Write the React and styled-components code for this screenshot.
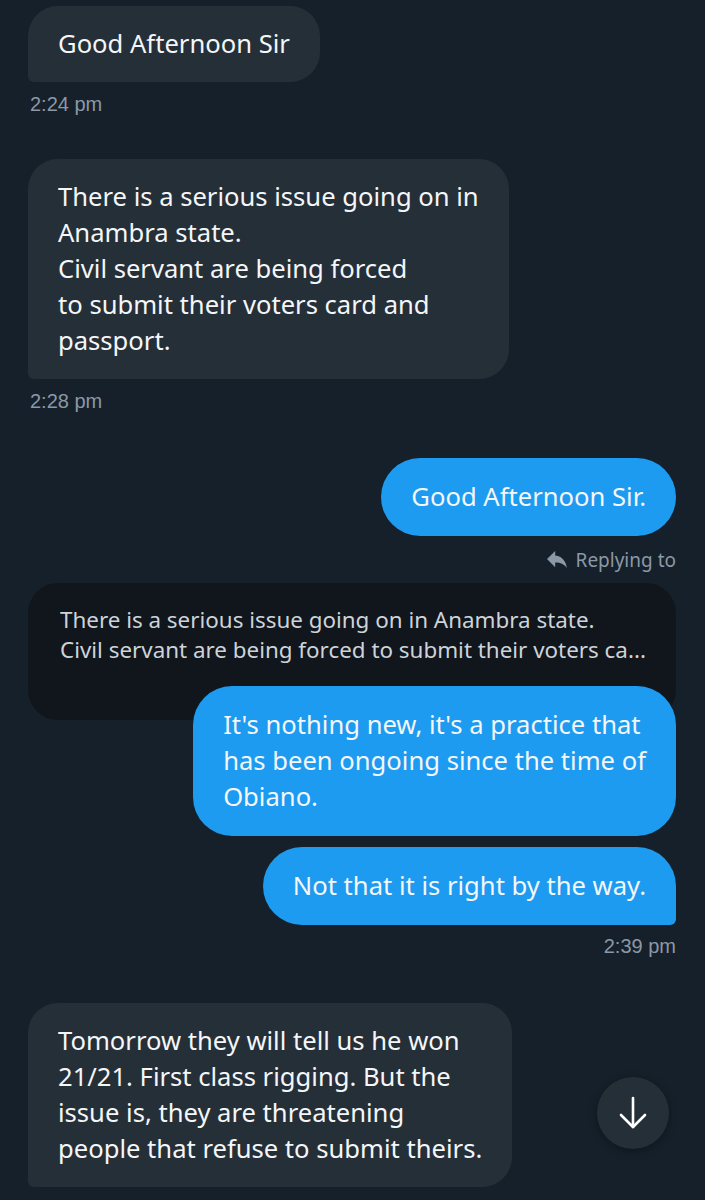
import React from "react";
import styled, { createGlobalStyle } from "styled-components";

const Global = createGlobalStyle`
  html, body { margin: 0; padding: 0; background: #16202a; }
  body { font-family: "Noto Sans", "Liberation Sans", sans-serif; }
`;

const Page = styled.div`
  position: relative;
  width: 705px;
  height: 1200px;
  overflow: hidden;
  background: #16202a;
  box-sizing: border-box;
  padding: 6px 29px 0 28px;
  display: flex;
  flex-direction: column;
`;

const Group = styled.div`
  display: flex;
  flex-direction: column;
  align-items: ${(p) => (p.$sent ? "flex-end" : "flex-start")};
  gap: ${(p) => p.$gap ?? 10}px;
  margin-bottom: ${(p) => p.$mb || 0}px;
`;

const Bubble = styled.div`
  box-sizing: border-box;
  padding: ${(p) => (p.$sent ? "21px 30px" : "20px 30px")};
  font-family: "Noto Sans", "Liberation Sans", sans-serif;
  font-size: 25.6px;
  line-height: 36px;
  color: #f4f6f8;
  background: ${(p) => (p.$sent ? "#1d9bf0" : "#252f38")};
  border-radius: ${(p) => (p.$sent ? "39px" : "30px")};
  ${(p) => p.$tail && (p.$sent ? "border-bottom-right-radius: 6px;" : "border-bottom-left-radius: 6px;")}
  position: relative;
  z-index: 1;
  white-space: pre;
`;

const Time = styled.div`
  font-family: "Liberation Sans", Arial, sans-serif;
  font-size: 20px;
  line-height: 24px;
  color: #8b98a5;
  margin-left: ${(p) => (p.$sent ? "0" : "2px")};
  margin-top: ${(p) => p.$mt || 0}px;
`;

const ReplyLabel = styled.div`
  display: flex;
  align-items: center;
  gap: 8px;
  font-family: "Noto Sans", sans-serif;
  font-size: 19px;
  line-height: 24px;
  color: #8b98a5;
`;

const ReplyBlock = styled.div`
  display: flex;
  flex-direction: column;
  align-items: flex-end;
  align-self: stretch;
`;

const Preview = styled.div`
  align-self: stretch;
  box-sizing: border-box;
  height: 137px;
  padding: 22px 28px 0 32px;
  background: #10161c;
  border-radius: 30px;
  font-family: "Noto Sans", sans-serif;
  font-size: 22.4px;
  line-height: 30px;
  color: #cdd3d9;
  margin-bottom: -34px;
`;

const PreviewLine = styled.div`
  white-space: nowrap;
  overflow: hidden;
  text-overflow: ellipsis;
`;

const FloatBtn = styled.button`
  position: absolute;
  left: 597px;
  top: 1077px;
  width: 72px;
  height: 72px;
  border: none;
  border-radius: 50%;
  background: #252f38;
  box-shadow: 0 2px 8px rgba(0, 0, 0, 0.35);
  display: flex;
  align-items: center;
  justify-content: center;
  padding: 0;
  z-index: 5;
`;

function ReplyIcon() {
  return (
    <svg width="22" height="20" viewBox="0 0 24 22" fill="#8b98a5">
      <path d="M10 6V1L1 10l9 9v-5.2c6.2 0 10.3 2 13 6.2C22 14 19 7 10 6z" />
    </svg>
  );
}

function ArrowDown() {
  return (
    <svg width="28" height="34" viewBox="0 0 28 34" fill="none" stroke="#ffffff" strokeWidth="2.6" strokeLinecap="round" strokeLinejoin="round">
      <path d="M14 2v29" />
      <path d="M2 19l12 12 12-12" />
    </svg>
  );
}

export default function App() {
  return (
    <>
      <Global />
      <Page>
        <Group $mb={43}>
          <Bubble $tail>Good Afternoon Sir</Bubble>
          <Time>2:24 pm</Time>
        </Group>
        <Group $mb={45}>
          <Bubble $tail>
            {"There is a serious issue going on in\nAnambra state.\nCivil servant are being forced\nto submit their voters card and\npassport."}
          </Bubble>
          <Time>2:28 pm</Time>
        </Group>
        <Group $sent $gap={12} $mb={11}>
          <Bubble $sent>Good Afternoon Sir.</Bubble>
          <ReplyLabel>
            <ReplyIcon />
            Replying to
          </ReplyLabel>
        </Group>
        <Group $sent $gap={11} $mb={45}>
          <ReplyBlock>
            <Preview>
              <PreviewLine>There is a serious issue going on in Anambra state.</PreviewLine>
              <PreviewLine>Civil servant are being forced to submit their voters ca...</PreviewLine>
            </Preview>
            <Bubble $sent>
              {"It's nothing new, it's a practice that\nhas been ongoing since the time of\nObiano."}
            </Bubble>
          </ReplyBlock>
          <Bubble $sent $tail>Not that it is right by the way.</Bubble>
          <Time $sent $mt={-2}>2:39 pm</Time>
        </Group>
        <Group>
          <Bubble $tail>
            {"Tomorrow they will tell us he won\n21/21. First class rigging. But the\nissue is, they are threatening\npeople that refuse to submit theirs."}
          </Bubble>
        </Group>
        <FloatBtn aria-label="Scroll to bottom">
          <ArrowDown />
        </FloatBtn>
      </Page>
    </>
  );
}
